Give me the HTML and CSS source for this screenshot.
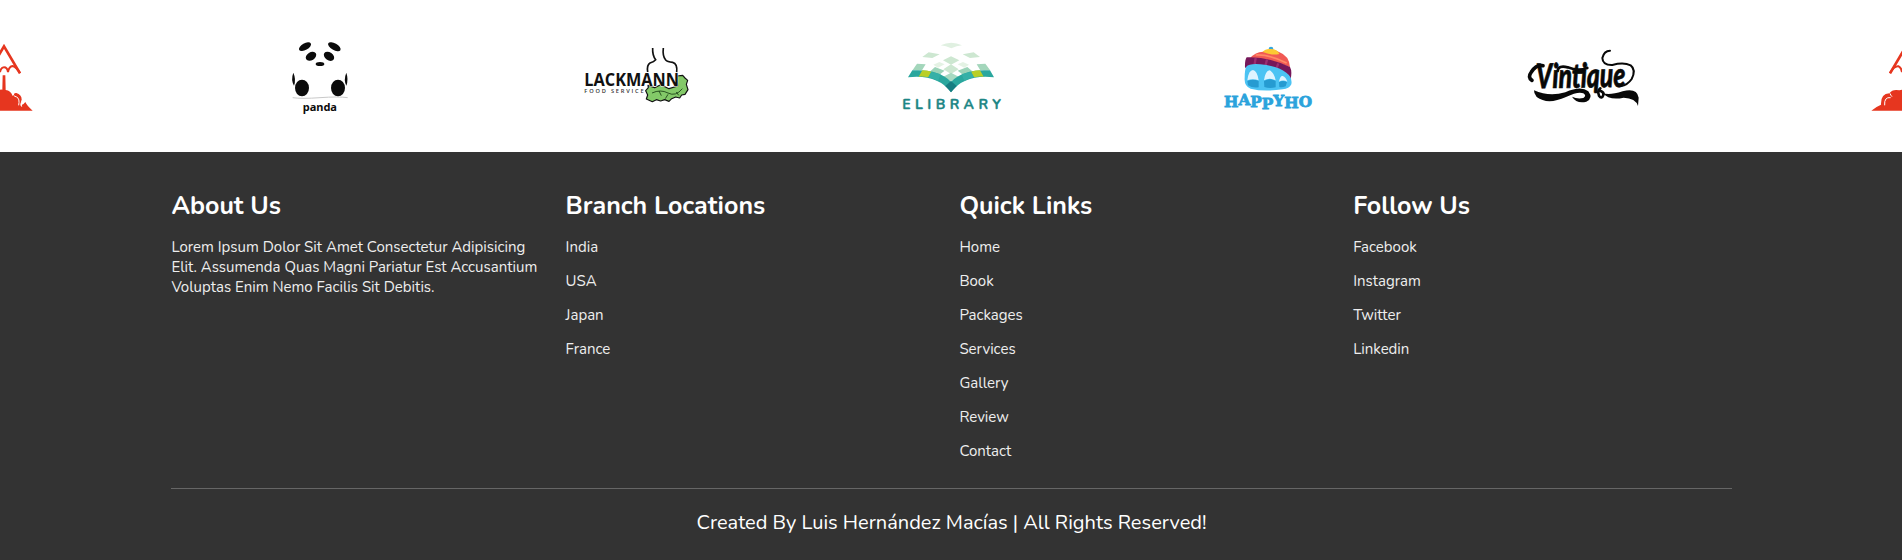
FILE: index.html
```html
<!DOCTYPE html>
<html lang="en">
<head>
<meta charset="utf-8">
<title>Travel</title>
<link rel="stylesheet" href="styles.css">
</head>
<body>
<svg class="defs" width="0" height="0" aria-hidden="true">
  <symbol id="rocket" viewBox="-141 0 300 270">
    <g fill="none" stroke="#e6361f" stroke-width="8">
      <path d="M-36 130L12 49L60 130"/>
      <path d="M-36 129Q-24 107 -10 109Q-2 113 0 126Q3 112 12 112Q22 112 24 126Q27 109 38 108Q50 112 60 129" stroke-width="6"/>
    </g>
    <path fill="#e6361f" d="M8 136H16L17 180Q32 182 38 198Q42 187 49 189Q66 194 65 211Q64 222 60 227Q72 224 76 216Q80 226 98 242H-92Q-78 230 -63 224Q-64 190 -38 190Q-28 176 -8 181Q0 178 7 179Z"/>
    <path fill="none" stroke="#fff" stroke-width="3" d="M40 186Q37 198 50 201Q60 206 56 226M67 210Q60 220 65 230M-36 190Q-34 196 -30 200M-34 203Q-54 200 -52 226"/>
  </symbol>
</svg>

<section class="clients">
  <div class="track">
    <div class="slide"><svg width="100" height="90"><use href="#rocket"/></svg></div>
    <div class="slide">
      <svg width="100" height="90" viewBox="0 0 300 270">
        <path d="M68 203Q95 207 150 203T233 203" fill="none" stroke="#c9c9c9" stroke-width="3"/>
        <g fill="#0b0b0b">
          <ellipse cx="105" cy="50" rx="20" ry="10" transform="rotate(-29 105 50)"/>
          <ellipse cx="193" cy="50" rx="21" ry="10" transform="rotate(30 193 50)"/>
          <ellipse cx="123" cy="79" rx="17" ry="12" transform="rotate(-32 123 79)"/>
          <ellipse cx="177" cy="79" rx="17" ry="12" transform="rotate(35 177 79)"/>
          <ellipse cx="150" cy="102" rx="13" ry="6"/>
          <ellipse cx="96" cy="174" rx="21" ry="25"/>
          <ellipse cx="204" cy="174" rx="21" ry="25"/>
          <path d="M70 128q9 20 2 39q-10-18-2-39zM229 128q7 20 0 39q-9-18 0-39z"/>
        </g>
        <text class="panda" x="98" y="242" textLength="103" lengthAdjust="spacingAndGlyphs">panda</text>
      </svg>
    </div>
    <div class="slide">
      <svg width="134" height="90" viewBox="0 -15 402 270">
        <path d="M234 151l20 7 18-9 25 12 26-8-2-30 17-2 7 8 8 7-4 12 5 16-9 14-10 2-6 9-12-3-12 5-8 8-13-5-12 4-13-4-12 6-18-8 4-12-6-13 8-9z" fill="#83c968" stroke="#111" stroke-width="3.5" stroke-linejoin="round"/>
        <path d="M246 174q25-12 48 0t43-13M267 168l7 14M294 178l-8 13M319 171l7 10" fill="none" stroke="#173c12" stroke-width="2.5"/>
        <path d="M248 39Q247 62 257 74Q252 80 240 84Q230 90 233 111M280 39Q277 63 287 75Q292 81 308 82Q323 86 320 112" fill="none" stroke="#111" stroke-width="5"/>
        <text class="lackmann" x="43" y="154" textLength="284" lengthAdjust="spacingAndGlyphs">LACKMANN</text>
        <text class="service" x="43" y="174" textLength="178">FOOD SERVICE</text>
      </svg>
    </div>
    <div class="slide">
      <svg width="132" height="90" viewBox="-6 0 396 270">
        <g fill="#cde7d1">
          <path d="M152 46q16-8 32-8q16 0 32 8q-16 2-32 9q-16-7-32-9z" fill="#e0f0e1"/>
          <path d="M97 81l19-14 33 6-22 11zM270 81l-19-14-33 6 22 11z"/>
          <path d="M159 91l24-12 25 12-25 13z"/>
          <path d="M130 104l18-8 16 7-20 10zM237 104l-18-8-16 7 20 10z" fill="#e4f2e4"/>
          <path d="M68 120l13-19 26 2-11 18zM300 120l-14-19-26 2 11 18z" fill="#a3d6bb"/>
          <path d="M121 124l14-13 29 11-16 12zM247 124l-15-13-29 11 16 12z" fill="#9bd3b8"/>
          <path d="M160 118l23-15 23 15-23 14z"/>
          <path d="M160 140l23-12 23 12-23 14z" fill="#a8dac2"/>
        </g>
        <path d="M54 142L67 121Q145 116 183 155Q222 116 300 121L312 142Q224 132 183 187Q142 132 54 142z" fill="#2aa79e"/>
        <path d="M86 140l11-19q14 0 27 4l-9 17q-15-3-29-2zM281 140l-11-19q-14 0-27 4l9 17q15-3 29-2z" fill="#b9cf26"/>
        <path d="M115 142l9-17q16 3 28 8l-8 20q-12-8-29-11zM252 142l-9-17q-16 3-28 8l8 20q12-8 29-11z" fill="#35b0a7"/>
        <path d="M166 168l17-15 17 15-17 19z" fill="#167d81"/>
        <text class="elibrary" x="37" y="237" textLength="296">ELIBRARY</text>
      </svg>
    </div>
    <div class="slide">
      <svg width="122" height="90" viewBox="0 -15 366 270">
        <circle cx="183" cy="42" r="7" fill="#35a7dd"/>
        <path d="M120 70Q136 50 159 50Q182 37 207 51Q238 62 240 97Q180 70 120 70z" fill="#f15a54"/>
        <path d="M137 60Q180 58 230 84" fill="none" stroke="#ff8a65" stroke-width="5"/>
        <path d="M158 51Q166 40 183 42Q202 42 208 57Q184 62 158 51z" fill="#fcc934"/>
        <path d="M110 67Q170 64 240 96Q247 108 242 132Q193 93 105 98Q104 76 110 67z" fill="#76175a"/>
        <path d="M137 69l-4 24M171 74l-6 23M205 85l-8 22" stroke="#9a2d71" stroke-width="7"/>
        <path d="M108 96Q118 85 151 88Q203 93 229 113Q248 127 244 148Q238 161 218 163Q161 171 122 161Q102 153 104 128Q104 107 108 96z" fill="#4cc3f3"/>
        <path d="M112 138Q130 130 146 138V157Q127 160 114 151zM162 138Q180 128 197 138V157Q178 161 163 156zM207 141Q220 134 231 142L227 154Q216 158 208 156z" fill="#269bd1"/>
        <path d="M112 136Q116 105 129 105Q142 108 146 136Q128 129 112 136zM162 136Q166 107 179 106Q192 112 197 136Q178 127 162 136zM207 140Q210 122 218 123Q228 127 232 140Q219 133 207 140z" fill="#dff4ff"/>
        <text class="happyho" y="215" textLength="264" lengthAdjust="spacingAndGlyphs"><tspan x="42">H</tspan><tspan dy="-6">A</tspan><tspan dy="8">P</tspan><tspan dy="6">P</tspan><tspan dy="-9">Y</tspan><tspan dy="5">H</tspan><tspan dy="-3">O</tspan></text>
      </svg>
    </div>
    <div class="slide">
      <svg width="146" height="90" viewBox="0 -15 438 270">
        <text class="vintique" x="64" y="160" textLength="268" lengthAdjust="spacingAndGlyphs" transform="rotate(-1 66 160)">Vintique</text>
        <g fill="none" stroke="#080808" stroke-linecap="round">
          <path d="M51 136Q37 127 49 111Q65 86 84 92" stroke-width="11"/>
          <path d="M128 108Q130 90 158 97Q190 110 217 99" stroke-width="8"/>
          <path d="M285 47Q267 47 262 69Q263 91 292 90Q326 81 347 91Q364 104 350 132Q337 151 318 153" stroke-width="6"/>
          <path d="M256 160Q246 168 252 182Q260 194 265 180Q268 172 256 167" stroke-width="8"/>
        </g>
        <path fill="#080808" d="M57 166Q102 186 151 172Q198 151 220 169Q236 190 214 200Q185 207 171 185Q187 193 205 189Q216 182 205 175Q190 168 153 186Q98 211 65 186Q56 175 57 166zM263 174Q282 182 323 169Q366 158 371 188L369 213Q362 189 326 188Q282 197 263 174z"/>
      </svg>
    </div>
    <div class="slide"><svg width="100" height="90"><use href="#rocket"/></svg></div>
  </div>
</section>

<footer class="footer">
  <div class="columns">
    <div class="box about">
      <h3>About Us</h3>
      <p>Lorem Ipsum Dolor Sit Amet Consectetur Adipisicing Elit. Assumenda Quas Magni Pariatur Est Accusantium Voluptas Enim Nemo Facilis Sit Debitis.</p>
    </div>
    <div class="box">
      <h3>Branch Locations</h3>
      <a>India</a><a>USA</a><a>Japan</a><a>France</a>
    </div>
    <div class="box">
      <h3>Quick Links</h3>
      <a>Home</a><a>Book</a><a>Packages</a><a>Services</a><a>Gallery</a><a>Review</a><a>Contact</a>
    </div>
    <div class="box">
      <h3>Follow Us</h3>
      <a>Facebook</a><a>Instagram</a><a>Twitter</a><a>Linkedin</a>
    </div>
  </div>
  <p class="credit">Created By Luis Hernández Macías | All Rights Reserved!</p>
</footer>
</body>
</html>
```

FILE: styles.css
```css
* { box-sizing: border-box; margin: 0; padding: 0; }
body { font-family: Nunito, Lato, sans-serif; background: #333; overflow: hidden; }
.defs { display: block; }
.clients { height: 152px; background: #fff; overflow: hidden; }
.track { display: flex; width: 2219px; margin-left: -155.5px; padding-top: 30px; }
.slide { flex: 0 0 317px; display: flex; justify-content: center; }
.panda { font: 700 34px "Noto Sans", sans-serif; fill: #0b0b0b; }
.lackmann { font: 700 54px "Open Sans", sans-serif; fill: #111; paint-order: stroke; stroke: #fff; stroke-width: 3px; }
.service { font: 600 17px "Open Sans", sans-serif; fill: #333; }
.elibrary { font: 700 42px Nunito, Lato, sans-serif; fill: #1c8685; stroke: #1c8685; stroke-width: 1px; }
.happyho { font: 700 46px "DejaVu Serif", serif; fill: #2ba3dc; stroke: #2ba3dc; stroke-width: 2.5px; }
.vintique { font: italic 900 102px Lato, sans-serif; fill: #080808; stroke: #080808; stroke-width: 2px; }
.footer { width: 1903px; height: 408px; padding: 37px 171.4px 0; background: #333; color: #fff; }
.columns { display: grid; grid-template-columns: repeat(4, 1fr); gap: 15px; height: 299px; }
.box h3 { font-size: 25px; line-height: 34px; font-weight: 700; margin-bottom: 14px; }
.box p, .box a { font-size: 15px; line-height: 20px; color: #eee; }
.box a { display: block; margin-bottom: 14px; }
.box + .box { padding-left: .4px; }
.credit { border-top: 1px solid #666; padding-top: 20px; text-align: center; font-size: 20px; line-height: 27px; }
```
